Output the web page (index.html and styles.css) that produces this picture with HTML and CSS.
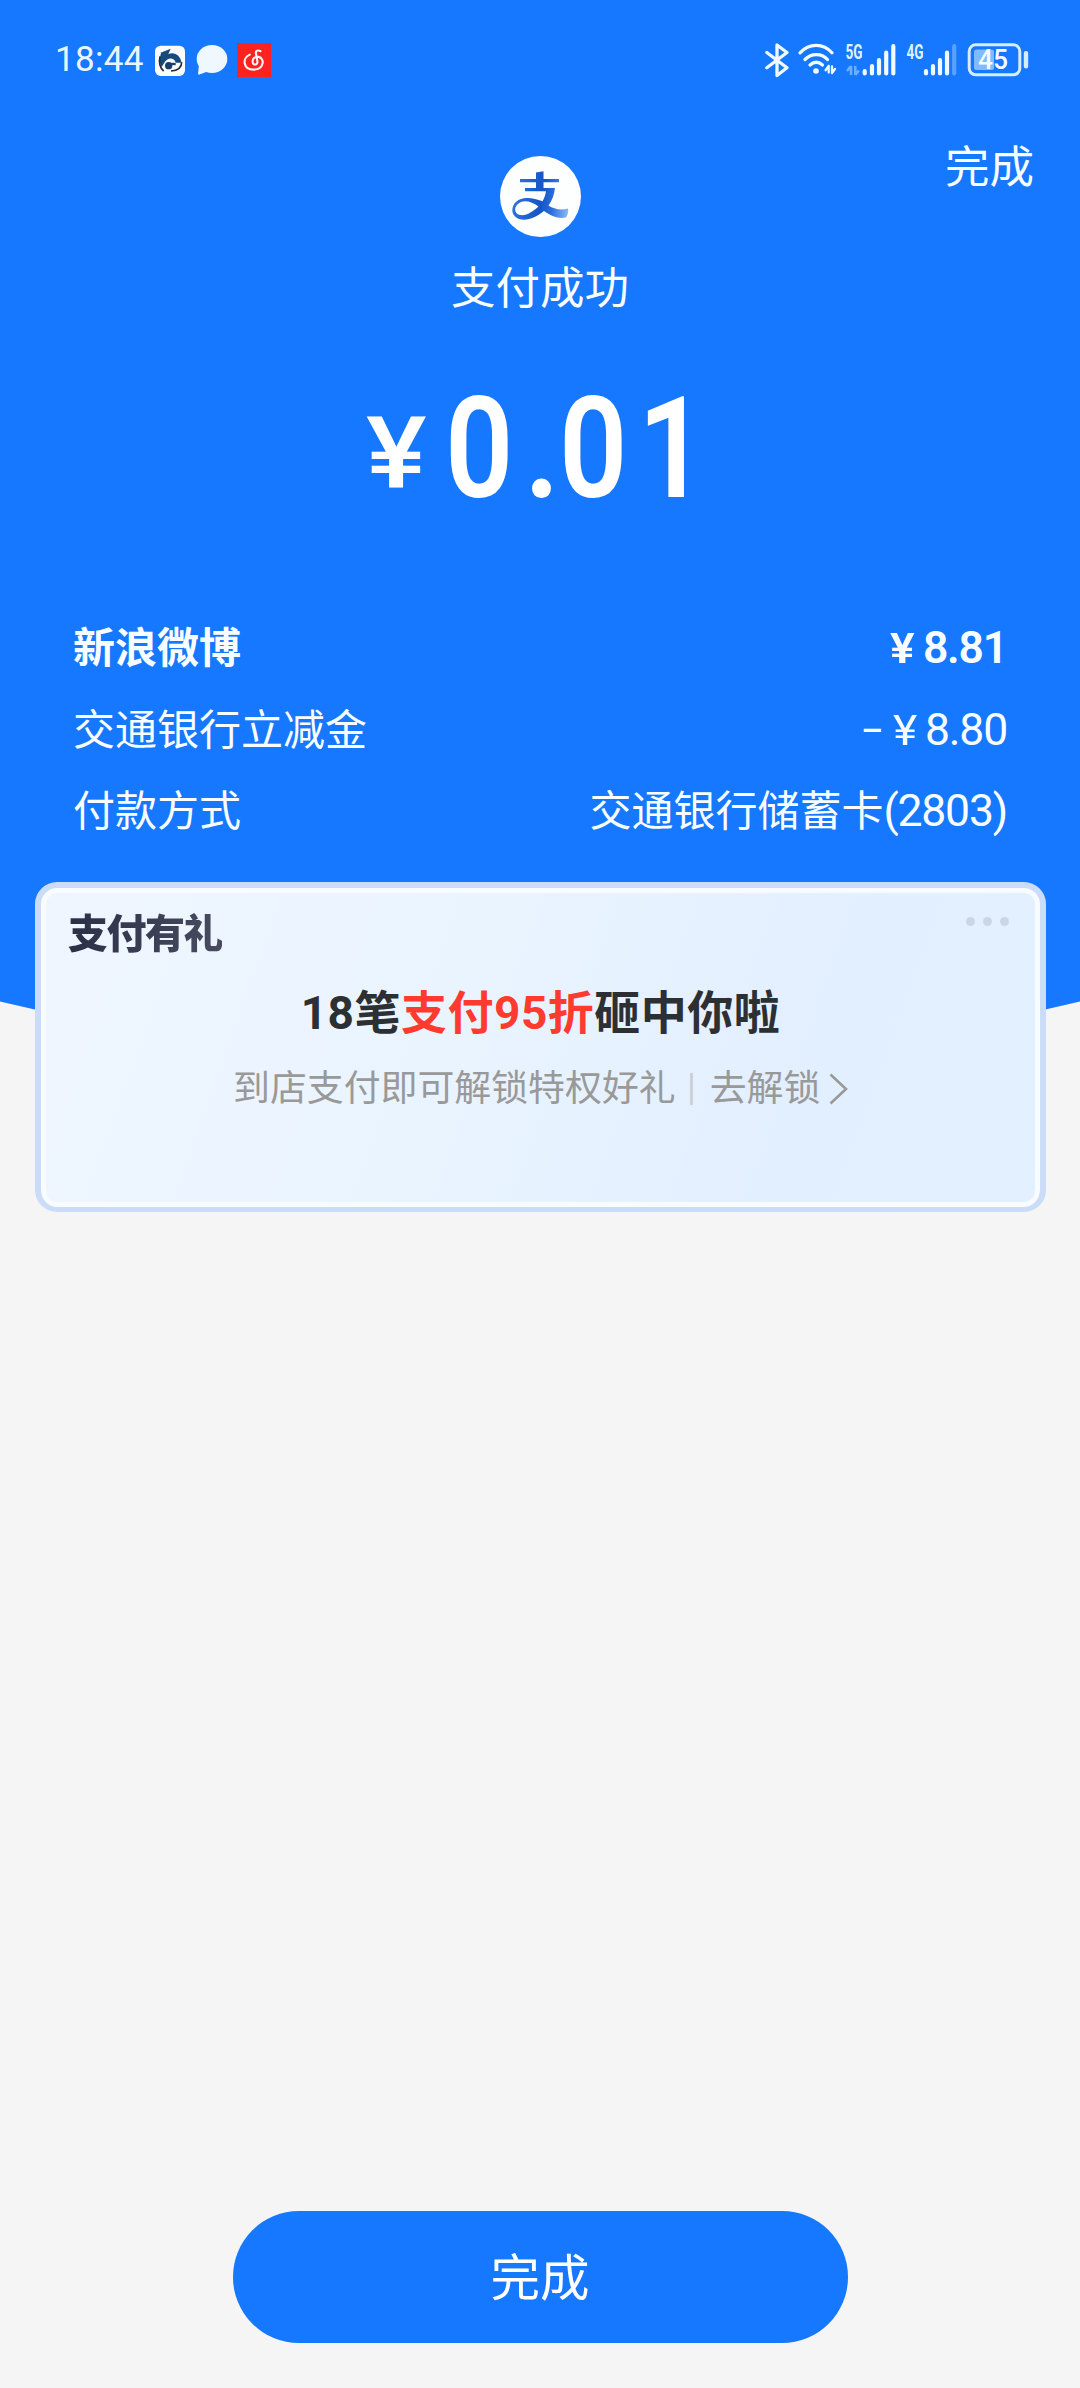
FILE: index.html
```html
<!DOCTYPE html>
<html lang="zh-CN">
<head>
<meta charset="utf-8">
<title>支付成功</title>
<link rel="stylesheet" href="styles.css">
</head>
<body>
<div class="screen">
  <header class="hero">
    <div class="status">
      <div class="status-left">
        <span class="clock">18:44</span>
        <svg class="app-bank" viewBox="0 0 90 93" width="30" height="31">
          <rect x="0" y="2" width="90" height="91" rx="17" fill="#fbfdfd"/>
          <path d="M15 24L47 11L40 27C58 19 76 30 80 53H62C58 37 38 36 29 52L20 66C12 54 14 40 18 24Z" fill="#164a7c"/>
          <path d="M15 34C11 54 14 68 26 78M80 52C80 68 68 77 48 78" fill="none" stroke="#222c33" stroke-width="5"/>
          <circle cx="41" cy="62" r="11" fill="#173f68"/>
          <path d="M42 57H62" stroke="#173f68" stroke-width="7"/>
        </svg>
        <svg class="app-chat" viewBox="196 44 32 32" width="32" height="32">
          <ellipse cx="212" cy="59" rx="15.300" ry="14" fill="#f0f8ff"/>
          <path d="M199 65l-1 8.500q0 1.500 1.500 1l8-3z" fill="#f0f8ff"/>
        </svg>
        <svg class="app-music" viewBox="237 43 34 34" width="34" height="34">
          <rect x="237" y="43" width="34" height="34" fill="#fb2220"/>
          <path d="M260.500 51.200c-2.500-1.500-5-.5-4.600 2l1.500 8.300c.6 3.800-4.600 4.300-4.800.2-.2-3.500 2.500-5.300 6-4.800 6.500 1.400 5.500 12.300-4.600 12.700-11 .2-12.300-11.500-4.200-15" fill="none" stroke="#fff4f2" stroke-width="2.100" stroke-linecap="round"/>
        </svg>
      </div>
      <div class="status-right">
        <svg viewBox="764 42 26 36" width="26" height="36" fill="none" stroke="#f0faff" stroke-width="3.300" stroke-linejoin="round" stroke-linecap="round">
          <path d="M766.800 52.500L787 67.800L777 75.500V45L787 52.500L766.800 67.800"/>
        </svg>
        <svg viewBox="798 42 40 36" width="40" height="36" fill="none" stroke="#f0faff" stroke-width="3.300" stroke-linecap="round">
          <path d="M801 52.800c9-10 23.500-10 32 0M806 59.500c6.500-6.600 16.500-6.600 22.500 0M811 65c4-3.500 8.500-3.500 12.500 0"/>
          <circle cx="817" cy="71" r="2.800" fill="#f0faff" stroke="none"/>
          <path d="M829.700 66v6.500m0-6.500l-3.200 4.200M833 66.500v6.500m0 0l3-4" stroke-width="2.300"/>
        </svg>
        <svg viewBox="843 40 54 38" width="54" height="38">
          <text class="net" x="844.500" y="57.500" textLength="17" lengthAdjust="spacingAndGlyphs">5G</text>
          <path d="M850 65v9m0-9l-4 5M854.300 65v9m0 0l3.500-4.500" fill="none" stroke="#6bb0ff" stroke-width="2.500"/>
          <path d="M863.700 70.200v2.300M871 65v7.500M878 59.200v13.300M885.200 51.700v20.800M892.300 45.200v27.300" stroke="#f0faff" stroke-width="4.200" stroke-linecap="round"/>
        </svg>
        <svg viewBox="904 40 54 38" width="54" height="38">
          <text class="net" x="905.500" y="57.500" textLength="17" lengthAdjust="spacingAndGlyphs">4G</text>
          <path d="M925 70.200v2.300M932 65v7.500M939 59.200v13.300M946 51.700v20.800" stroke="#f0faff" stroke-width="4.200" stroke-linecap="round"/>
          <path d="M953.200 45.200v27.300" stroke="#57a2ff" stroke-width="4.200" stroke-linecap="round"/>
        </svg>
        <svg viewBox="966 42 64 36" width="64" height="36">
          <rect x="969.200" y="44.800" width="50.600" height="30" rx="6.500" fill="none" stroke="#d4edff" stroke-width="3"/>
          <rect x="974" y="49.500" width="20" height="20.500" rx="2.500" fill="#80bbff"/>
          <rect x="1023.800" y="51" width="4.400" height="17.500" rx="2" fill="#d4edff"/>
          <text class="charge" x="978" y="68.500" textLength="30" lengthAdjust="spacingAndGlyphs">45</text>
        </svg>
      </div>
    </div>

    <div class="top-row">
      <div class="logo">
        <svg viewBox="0 0 81 81" width="81" height="81">
          <defs>
            <linearGradient id="ink" x1="12" y1="50" x2="68" y2="58" gradientUnits="userSpaceOnUse">
              <stop offset="0" stop-color="#2d74dd"/><stop offset=".5" stop-color="#1456c4"/>
              <stop offset=".7" stop-color="#2b6edb"/><stop offset="1" stop-color="#8cb9f7"/>
            </linearGradient>
          </defs>
          <circle cx="40.500" cy="40.500" r="40.500" fill="#fdfefe"/>
          <g fill="url(#ink)">
            <path d="M36 16.500l7.500-1.300V23H59v3.300H43.500V32H55c-.8 7-3 12.500-6.500 17.500C54 53 60 54.500 68 52.500c.8 3-.5 6.500-2 9-8 1.500-15-1.500-22-6.500-8 6.500-17 10.500-25 8C12 60.500 10.500 53 14.500 47.500c6-7.500 17.500-6.500 28-2.200 1.800-3 3-6.300 3.500-10.100H25V32h11v-5.700H20V23h16zM38.500 50.500c-7-5-14.500-7-20-3-5 4-4 9.500.5 11.200 6 2 13.500-2.500 19.500-8.200z"/>
          </g>
        </svg>
      </div>
      <a class="finish">完成</a>
    </div>
    <div class="result">支付成功</div>
    <div class="amount"><span class="yen">¥</span><span class="zero">0</span><span class="point">.</span><span class="zero">0</span><span class="one">1</span></div>

    <div class="details">
      <div class="row strong"><span>新浪微博</span><span class="value"><span class="cur">¥</span><span class="num">8.81</span></span></div>
      <div class="row"><span>交通银行立减金</span><span class="value"><span class="minus">−</span><span class="cur">¥</span><span class="num">8.80</span></span></div>
      <div class="row"><span>付款方式</span><span class="value">交通银行储蓄卡<span class="num">(2803)</span></span></div>
    </div>
  </header>

  <section class="card">
    <div class="card-head">
      <span class="card-brand">支付有礼</span>
      <span class="dots"><i></i><i></i><i></i></span>
    </div>
    <div class="promo">18笔<em>支付95折</em>砸中你啦</div>
    <div class="unlock">
      <span>到店支付即可解锁特权好礼</span><i class="bar"></i><span>去解锁</span>
      <svg viewBox="0 0 20 32" width="20" height="32" fill="none" stroke="#999" stroke-width="2.600"><path d="M1.500 1.500L17 16L1.500 30.500"/></svg>
    </div>
  </section>

  <button class="done" type="button">完成</button>
</div>
</body>
</html>
```

FILE: styles.css
```css
* { box-sizing: border-box; }
body { margin: 0; background: #f5f5f5; }
svg { display: block; flex: none; }
.screen {
  width: 1080px; height: 2388px;
  display: flex; flex-direction: column; align-items: center;
  font-family: Roboto, "Noto Sans CJK SC", sans-serif;
}
.hero {
  width: 1080px; height: 1070px; flex: none;
  background: #1677ff; color: #f8fdff;
  clip-path: path("M0 0H1080V1001.500Q540 1130 0 1001.500Z");
}

/* status bar */
.status {
  height: 120px; padding: 0 50px 0 55px;
  display: flex; justify-content: space-between; align-items: center;
}
.status-left, .status-right { display: flex; align-items: center; }
.clock { width: 100px; font-size: 35px; line-height: 40px; letter-spacing: .3px; color: #e9f6ff; }
.app-chat { margin-left: 11px; }
.app-music { margin-left: 9px; }
.status-right { gap: 7px; }
.net { font: 700 20px Roboto, sans-serif; fill: #dff2ff; }
.charge { font: 500 27px Roboto, sans-serif; fill: #f4fbff; }

/* result */
.top-row {
  height: 117px; padding: 36px 46px 0;
  display: grid; grid-template-columns: 1fr 81px 1fr;
}
.logo { grid-column: 2; }
.finish { justify-self: end; font-size: 44.500px; line-height: 66px; margin-top: -21px; }
.result { height: 66px; margin-top: 19px; font-size: 44.500px; line-height: 66px; text-align: center; }
.amount {
  height: 164px; margin-top: 45px; padding-left: 366px;
  display: flex; align-items: baseline;
  font-weight: 600; font-size: 141px; line-height: 164px; color: #fff;
}
.amount span { display: block; transform-origin: left; }
.yen { width: 79px; font-size: 101px; font-weight: 500; transform: translateY(-9px) scaleX(1.13); }
.zero { width: 79px; transform: scaleX(.85); }
.point { width: 35px; transform: scaleX(.9); }
.one { transform: scaleX(.85); }

.details { margin-top: 77px; padding: 0 73px; display: flex; flex-direction: column; }
.row { display: flex; justify-content: space-between; height: 81.500px; font-size: 42px; line-height: 81.500px; }
.strong { font-weight: 700; }
.strong .value { font-weight: 600; }
.num { font-size: 44.500px; letter-spacing: -1.200px; }
.cur { display: inline-block; margin-right: 9px; transform: scaleX(1.1); }
.minus { margin-right: 10px; }

/* gift card */
.card {
  width: 1011px; height: 330px; margin: -188px 0 0 1px; flex: none; z-index: 1;
  border: 6px solid #cbdcf8; border-bottom-width: 5px; border-radius: 22px;
  background: linear-gradient(110deg, #eff6ff, #eaf4ff 40%, #e2efff 75%, #e3f0ff);
  box-shadow: inset 0 0 1px 5px #f8fcff;
}
.card-head { display: flex; justify-content: space-between; padding: 17px 31px 0 27px; }
.card-brand {
  margin-top: 2px; font-size: 40px; font-weight: 900; line-height: 56px; letter-spacing: -1.500px;
  color: transparent; background: linear-gradient(90deg, #2b3046, #484c61); background-clip: text;
}
.dots { display: flex; gap: 8px; margin-top: 12px; }
.dots i { width: 9px; height: 9px; border-radius: 50%; background: #cbd6e5; }
.promo { margin-top: 17px; font-size: 46px; font-weight: 700; line-height: 66px; letter-spacing: .5px; text-align: center; color: #2d3033; }
.promo em { font-style: normal; color: #ff3b30; }
.unlock {
  height: 56px; margin-top: 15px; padding-left: 192px;
  display: flex; align-items: center; font-size: 36.900px; line-height: 56px; color: #999;
}
.bar { width: 3px; height: 32px; margin: 0 17px 0 14px; background: #ccd1d6; }
.unlock svg { margin-left: 9px; }

.done {
  width: 615px; height: 132px; margin-top: 999px; padding: 0 0 5px; border: 0; border-radius: 66px;
  flex: none; background: #1677ff; color: #fff; font-family: inherit; font-size: 49.500px;
}
```
